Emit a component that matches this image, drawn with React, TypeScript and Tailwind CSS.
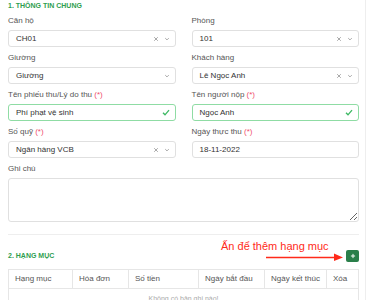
import { useState } from "react";

type SelectProps = {
  value: string;
  clearable?: boolean;
};

function Label({ text, required }: { text: string; required?: boolean }) {
  return (
    <div className="h-[10px] leading-[10px] mb-[4px] text-[8px] text-[#555]">
      {text}
      {required && <span className="text-[#f0506e]"> (*)</span>}
    </div>
  );
}

function FakeSelect({ value, clearable = true }: SelectProps) {
  return (
    <div className="h-[17px] flex items-center rounded-[3px] border border-[#e0e0e0] bg-white pl-[7px] pr-[5px] text-[8px] text-[#333]">
      <span className="flex-1">{value}</span>
      {clearable && (
        <svg width="6" height="6" viewBox="0 0 10 10" className="mr-[5px]">
          <path d="M2 2 L8 8 M8 2 L2 8" stroke="#999" strokeWidth="1.4" />
        </svg>
      )}
      <svg width="6" height="6" viewBox="0 0 10 10">
        <path d="M2 3.5 L5 6.5 L8 3.5" stroke="#999" strokeWidth="1.4" fill="none" />
      </svg>
    </div>
  );
}

function ValidInput({ value }: { value: string }) {
  return (
    <div className="h-[17px] flex items-center rounded-[3px] border border-[#8fdca4] bg-white pl-[7px] pr-[5px] text-[8px] text-[#333]">
      <span className="flex-1">{value}</span>
      <svg width="8" height="7" viewBox="0 0 12 10">
        <path d="M1.5 5.5 L4.5 8.5 L10.5 1.5" stroke="#3cb862" strokeWidth="2" fill="none" />
      </svg>
    </div>
  );
}

function PlainInput({ value }: { value: string }) {
  return (
    <div className="h-[17px] flex items-center rounded-[3px] border border-[#e0e0e0] bg-white px-[7px] text-[8px] text-[#333]">
      {value}
    </div>
  );
}

export default function App() {
  const [note, setNote] = useState("");

  const cols = [
    { name: "Hạng mục", w: "w-[64px]" },
    { name: "Hóa đơn", w: "w-[56px]" },
    { name: "Số tiền", w: "w-[70px]" },
    { name: "Ngày bắt đầu", w: "w-[66px]" },
    { name: "Ngày kết thúc", w: "w-[62px]" },
    { name: "Xóa", w: "flex-1" },
  ];

  return (
    <div
      className="w-[366px] h-[300px] overflow-hidden border-r border-[#eeeeee] bg-white px-[8px]"
      style={{ fontFamily: '"Liberation Sans", Arial, sans-serif' }}
    >
      {/* 1. thông tin chung */}
      <div className="pt-[1px] h-[11px] leading-[10px] text-[7px] font-bold text-[#2e9e4f]">
        1. THÔNG TIN CHUNG
      </div>

      <div className="mt-[5px] w-[351px] grid grid-cols-2 gap-x-[16px] gap-y-[6px]">
        <div>
          <Label text="Căn hộ" />
          <FakeSelect value="CH01" />
        </div>
        <div>
          <Label text="Phòng" />
          <FakeSelect value="101" />
        </div>
        <div>
          <Label text="Giường" />
          <FakeSelect value="Giường" clearable={false} />
        </div>
        <div>
          <Label text="Khách hàng" />
          <FakeSelect value="Lê Ngọc Anh" />
        </div>
        <div>
          <Label text="Tên phiếu thu/Lý do thu" required />
          <ValidInput value="Phí phạt vệ sinh" />
        </div>
        <div>
          <Label text="Tên người nộp" required />
          <ValidInput value="Ngọc Anh" />
        </div>
        <div>
          <Label text="Số quỹ" required />
          <FakeSelect value="Ngân hàng VCB" />
        </div>
        <div>
          <Label text="Ngày thực thu" required />
          <PlainInput value="18-11-2022" />
        </div>
        <div className="col-span-2">
          <Label text="Ghi chú" />
          <textarea
            value={note}
            onChange={(e) => setNote(e.target.value)}
            className="block w-full h-[44px] rounded-[3px] border border-[#e0e0e0] bg-white outline-none"
          />
        </div>
      </div>

      <div className="mt-[12px] w-[351px] border-t border-[#eeeeee]" />

      {/* 2. hạng mục */}
      <div className="mt-[15px] w-[351px] h-[12px] flex items-center relative">
        <div className="flex-1 text-[7px] font-bold text-[#2e9e4f]">2. HẠNG MỤC</div>
        <button className="w-[13px] h-[12px] rounded-[2px] bg-[#2a7f4a] flex items-center justify-center">
          <svg width="6" height="6" viewBox="0 0 10 10">
            <path d="M5 1.5 V8.5 M1.5 5 H8.5" stroke="#fff" strokeWidth="1.6" />
          </svg>
        </button>
        {/* chú thích */}
        <div className="absolute left-[213px] top-[-10px] text-[11px] leading-[12px] text-[#ff2a1a] whitespace-nowrap">
          Ấn để thêm hạng mục
        </div>
        <svg
          className="absolute left-[258px] top-[3px]"
          width="78"
          height="8"
          viewBox="0 0 78 8"
        >
          <path d="M0 4.5 H70" stroke="#ff2a1a" strokeWidth="1.3" />
          <path d="M68 0.5 L77 4.5 L68 8 Z" fill="#ff2a1a" />
        </svg>
      </div>

      <div className="mt-[7px] w-[351px] border border-[#e6e6e6] text-[8px] text-[#555]">
        <div className="flex h-[19px] border-b border-[#e6e6e6]">
          {cols.map((c, i) => (
            <div
              key={c.name}
              className={`${c.w} shrink-0 flex items-center px-[6px] whitespace-nowrap ${i < cols.length - 1 ? "border-r border-[#e6e6e6]" : ""}`}
            >
              {c.name}
            </div>
          ))}
        </div>
        <div className="h-[20px] flex items-center justify-center text-[7px] text-[#aaa]">
          Không có bản ghi nào!
        </div>
      </div>
    </div>
  );
}
